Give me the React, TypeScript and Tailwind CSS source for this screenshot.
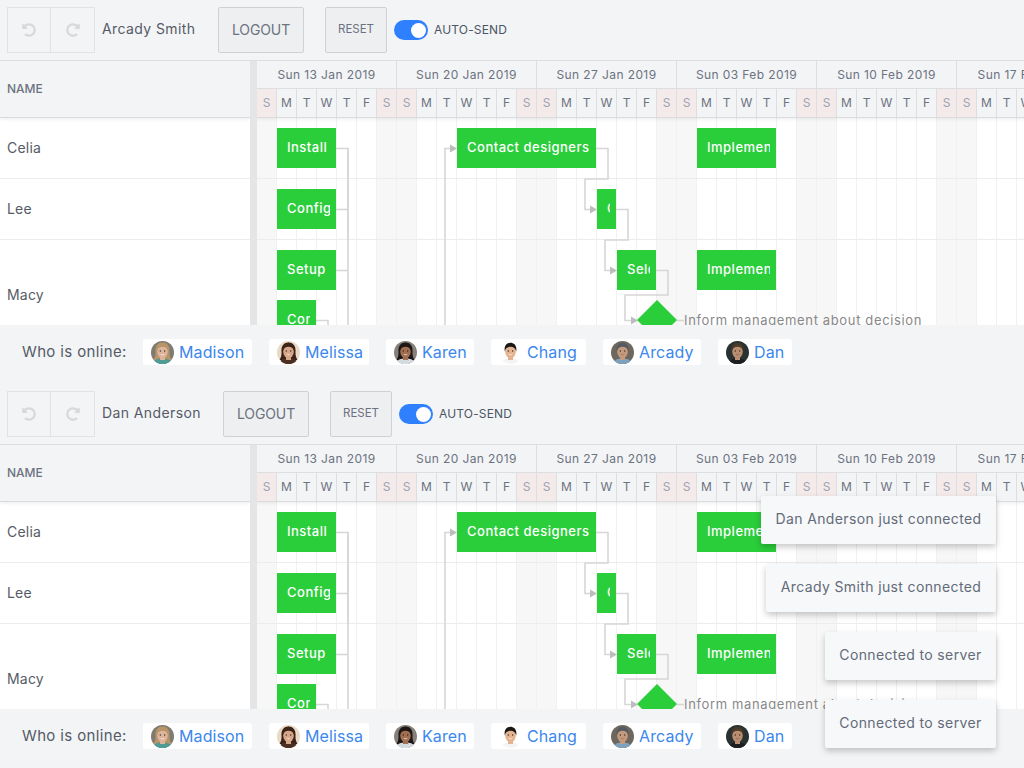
import React from "react";
import { FaUndoAlt, FaRedoAlt } from "react-icons/fa";

const font = { fontFamily: "Inter, 'Open Sans', sans-serif" };

const weeks = ["Sun 13 Jan 2019", "Sun 20 Jan 2019", "Sun 27 Jan 2019", "Sun 03 Feb 2019", "Sun 10 Feb 2019", "Sun 17 Feb 2019"];
const letters = ["S", "M", "T", "W", "T", "F", "S"];
const days = weeks.flatMap(() => letters);

function Bar({ cls, label }: { cls: string; label: string }) {
  return (
    <div className={`absolute h-10 bg-[#2acd3a] flex items-center pl-[10px] pr-[6px] text-[13px] font-medium text-white ${cls}`}>
      <div className="overflow-hidden whitespace-nowrap w-full tracking-[0.5px]">{label}</div>
    </div>
  );
}

function Links() {
  const c = "#d6d6d6";
  const a = "#bdbdbd";
  const off = (x: number) => x - 257;
  const oy = (y: number) => y - 118;
  const paths = [
    [[336, 148.5], [348, 148.5], [348, 240]],
    [[336, 209.5], [348, 209.5]],
    [[336, 270.5], [348, 270.5]],
    [[348, 148], [348, 330]],
    [[316, 320.5], [328, 320.5], [328, 330]],
    [[445, 330], [445, 148.5], [451, 148.5]],
    [[596, 148.5], [608, 148.5], [608, 179], [585, 179], [585, 209.5], [591, 209.5]],
    [[616, 209.5], [628, 209.5], [628, 240], [605, 240], [605, 270.5], [611, 270.5]],
    [[656, 270.5], [668, 270.5], [668, 295], [625, 295], [625, 320.5], [632, 320.5]],
    [[677, 320.5], [684, 320.5]],
  ];
  const heads = [[457, 148.5], [597, 209.5], [617, 270.5], [638, 320.5]];
  return (
    <svg className="absolute left-0 top-0" width="840" height="220" fill="none">
      {paths.map((p, i) => (
        <polyline key={i} points={p.map(([x, y]) => `${off(x)},${oy(y)}`).join(" ")} stroke={c} strokeWidth="1.6" />
      ))}
      {heads.map(([x, y], i) => (
        <polygon key={i} points={`${off(x)},${oy(y)} ${off(x) - 7},${oy(y) - 4} ${off(x) - 7},${oy(y) + 4}`} fill={a} />
      ))}
      <polygon points={`${off(657)},${oy(300)} ${off(677)},${oy(320)} ${off(657)},${oy(340)} ${off(637)},${oy(320)}`} fill="#2acd3a" />
    </svg>
  );
}

type Face = {
  bg: string;
  skin: string;
  hair: string;
  shirt: string;
  long?: boolean;
  smile?: string;
};

function Avatar({ bg, skin, hair, shirt, long, smile }: Face) {
  return (
    <svg width="23" height="23" viewBox="0 0 23 23" className="rounded-full shrink-0">
      <rect width="23" height="23" fill={bg} />
      {long && <path d="M11.500 1.500C6 1.500 4 6 4.500 11c.3 3-.8 6-2 8h18c-1.200-2-2.300-5-2-8 .5-5-1.500-9.500-7-9.500z" fill={hair} />}
      <path d="M2 23c.8-4.500 5-5.500 9.500-5.500S20.200 18.500 21 23z" fill={shirt} />
      <rect x="9" y="14" width="5" height="5" fill={skin} />
      <ellipse cx="11.500" cy="10.500" rx="5.300" ry="6.800" fill={skin} />
      <path d="M5.800 10.500C4.800 4.500 8 1.800 11.500 1.800S18.200 4.500 17.200 10.500c-.6-3-2.600-4.700-5.700-4.700S6.400 7.500 5.800 10.500z" fill={hair} />
      <circle cx="9.300" cy="10" r=".65" fill="#2b2420" />
      <circle cx="13.700" cy="10" r=".65" fill="#2b2420" />
      <path d="M9.200 13.600c1.300 1 3.300 1 4.600 0z" fill={smile ?? "#ffffff"} />
    </svg>
  );
}

const people: (Face & { name: string; w: string })[] = [
  { name: "Madison", w: "w-[109px]", bg: "#7f7a72", skin: "#dcb49b", hair: "#b89468", shirt: "#4f9c96", long: true },
  { name: "Melissa", w: "w-[100px]", bg: "#e9d9c6", skin: "#d8a688", hair: "#3a2318", shirt: "#4d2f22", long: true },
  { name: "Karen", w: "w-[88px]", bg: "#86807a", skin: "#a06e50", hair: "#1e1715", shirt: "#d5dce0", long: true },
  { name: "Chang", w: "w-[95px]", bg: "#ffffff", skin: "#e3b48f", hair: "#1b1714", shirt: "#f4f4f4" },
  { name: "Arcady", w: "w-[98px]", bg: "#6e675d", skin: "#c49a7f", hair: "#545a5f", shirt: "#7da0bd", smile: "#8f6a56" },
  { name: "Dan", w: "w-[74px]", bg: "#2a3231", skin: "#b98e70", hair: "#4a3a2a", shirt: "#1c1f20", smile: "#7a5a48" },
];

function Panel({ name, nameW }: { name: string; nameW: string }) {
  return (
    <div className="h-[384px] flex flex-col bg-[#f3f4f6]">
      <div className="h-[60px] shrink-0 flex items-center pl-[7px]">
        <div className="w-[44px] h-[46px] border border-[#e0e2e5] flex items-center justify-center text-[#d6d8da] text-[14px]"><FaUndoAlt /></div>
        <div className="w-[44px] h-[46px] border border-l-0 border-[#e0e2e5] flex items-center justify-center text-[#d6d8da] text-[14px]"><FaRedoAlt /></div>
        <div className={`ml-[7px] pb-[3px] text-[14px] text-[#555b66] tracking-[0.4px] whitespace-nowrap ${nameW}`}>{name}</div>
        <div className="w-[86px] h-[46px] pb-[2px] border border-[#cfd1d4] bg-[#eeeff1] rounded-[2px] flex items-center justify-center text-[14px] text-[#6b7280] tracking-[-0.1px]">LOGOUT</div>
        <div className="ml-[21px] w-[62px] h-[46px] pb-[1px] border border-[#cfd1d4] bg-[#eeeff1] rounded-[2px] flex items-center justify-center text-[11.5px] text-[#6b7280]">RESET</div>
        <div className="ml-[7px] w-[34px] h-5 rounded-full bg-[#2f80ff] flex items-center justify-end pr-[2px]">
          <div className="w-[15px] h-[15px] rounded-full bg-white" />
        </div>
        <div className="ml-[6px] text-[12px] text-[#4b5563] tracking-[0.15px]">AUTO-SEND</div>
      </div>

      <div className="h-[265px] shrink-0 flex overflow-hidden border-t border-[#dcdee1] bg-white relative">
        <div className="w-[250px] shrink-0 flex flex-col">
          <div className="h-[57px] shrink-0 bg-[#f3f4f6] border-b border-[#d9dbde] flex items-center pl-[7px] text-[12px] font-medium text-[#6b7280] shadow-[0_1px_4px_rgba(0,0,0,0.08)] relative z-10">NAME</div>
          <div className="h-[61px] shrink-0 pb-[2px] border-b border-[#ececec] flex items-center pl-[7px] text-[14px] text-[#555b66] tracking-[0.2px]">Celia</div>
          <div className="h-[61px] shrink-0 pb-[2px] border-b border-[#ececec] flex items-center pl-[7px] text-[14px] text-[#555b66] tracking-[0.2px]">Lee</div>
          <div className="h-[110px] shrink-0 pb-[2px] flex items-center pl-[7px] text-[14px] text-[#555b66] tracking-[0.2px]">Macy</div>
        </div>
        <div className="w-[7px] shrink-0 bg-[#e4e5e7] relative z-20" />
        <div className="flex-1 overflow-hidden flex flex-col">
          <div className="w-[840px] h-[57px] shrink-0 bg-[#f3f4f6] border-b border-[#d9dbde] shadow-[0_1px_4px_rgba(0,0,0,0.08)] relative z-10 flex flex-col">
            <div className="h-[28px] flex shrink-0">
              {weeks.map((w) => (
                <div key={w} className="w-[140px] shrink-0 border-r border-b border-[#dcdee1] flex items-center justify-center text-[12px] text-[#6b7280] tracking-[0.4px] whitespace-nowrap">{w}</div>
              ))}
            </div>
            <div className="flex-1 flex">
              {days.map((d, i) => (
                <div key={i} className={`w-5 shrink-0 border-r border-[#dcdee1] flex items-center justify-center text-[12px] ${d === "S" ? "bg-[#f4eaea] text-[#9ca3af]" : "text-[#6b7280]"}`}>{d}</div>
              ))}
            </div>
          </div>
          <div className="relative flex-1 w-[840px]">
            <div className="absolute inset-0 flex">
              {days.map((d, i) => (
                <div key={i} className={`w-5 shrink-0 border-r border-[#f1f1f1] ${d === "S" ? "bg-[#f7f7f7]" : ""}`} />
              ))}
            </div>
            <div className="absolute left-0 right-0 top-0 flex flex-col">
              <div className="h-[61px] border-b border-[#ececec]" />
              <div className="h-[61px] border-b border-[#ececec]" />
            </div>
            <Links />
            <Bar cls="left-[20px] top-[10px] w-[59px]" label="Install Apache" />
            <Bar cls="left-[20px] top-[71px] w-[59px]" label="Configure firewall" />
            <Bar cls="left-[20px] top-[132px] w-[59px]" label="Setup load balancer" />
            <Bar cls="left-[20px] top-[182px] w-[39px]" label="Configure ports" />
            <Bar cls="left-[200px] top-[10px] w-[139px]" label="Contact designers" />
            <Bar cls="left-[340px] top-[71px] w-[19px]" label="Create shortlist" />
            <Bar cls="left-[360px] top-[132px] w-[39px]" label="Select & review" />
            <Bar cls="left-[440px] top-[10px] w-[79px]" label="Implement SSO" />
            <Bar cls="left-[440px] top-[132px] w-[79px]" label="Implement chat" />
            <div className="absolute left-[427px] top-[193px] text-[13px] text-[#888888] tracking-[0.64px] whitespace-nowrap">Inform management about decision</div>
          </div>
        </div>
      </div>

      <div className="flex-1 flex items-center pl-[22px] pb-[5px] relative z-20 bg-[#f3f4f6]">
        <div className="w-[121px] shrink-0 pt-[1px] text-[15px] text-[#555b66] tracking-[0.36px] whitespace-nowrap">Who is online:</div>
        <div className="flex gap-[17px]">
          {people.map((p) => (
            <div key={p.name} className={`h-[26px] bg-white rounded-[3px] flex items-center pl-2 gap-[5px] ${p.w}`}>
              <Avatar {...p} />
              <span className="text-[16px] text-[#3b87ee] tracking-[0.1px]">{p.name}</span>
            </div>
          ))}
        </div>
      </div>
    </div>
  );
}

const toasts = [
  { t: "Dan Anderson just connected", w: "w-[235px]" },
  { t: "Arcady Smith just connected", w: "w-[230px]" },
  { t: "Connected to server", w: "w-[171px]" },
  { t: "Connected to server", w: "w-[171px]" },
];

export default function App() {
  return (
    <div className="relative w-[1024px] h-[768px] overflow-hidden bg-[#f3f4f6]" style={font}>
      <Panel name="Arcady Smith" nameW="w-[116px]" />
      <Panel name="Dan Anderson" nameW="w-[121px]" />
      <div className="absolute right-[28px] bottom-[20px] z-30 flex flex-col items-end gap-5">
        {toasts.map((x, i) => (
          <div key={i} className={`h-[48px] pb-[4px] bg-[#f7f8fa] rounded-[2px] shadow-[0_3px_6px_rgba(0,0,0,0.22)] flex items-center justify-center text-[14px] text-[#636b78] tracking-[0.37px] whitespace-nowrap ${x.w}`}>{x.t}</div>
        ))}
      </div>
    </div>
  );
}
